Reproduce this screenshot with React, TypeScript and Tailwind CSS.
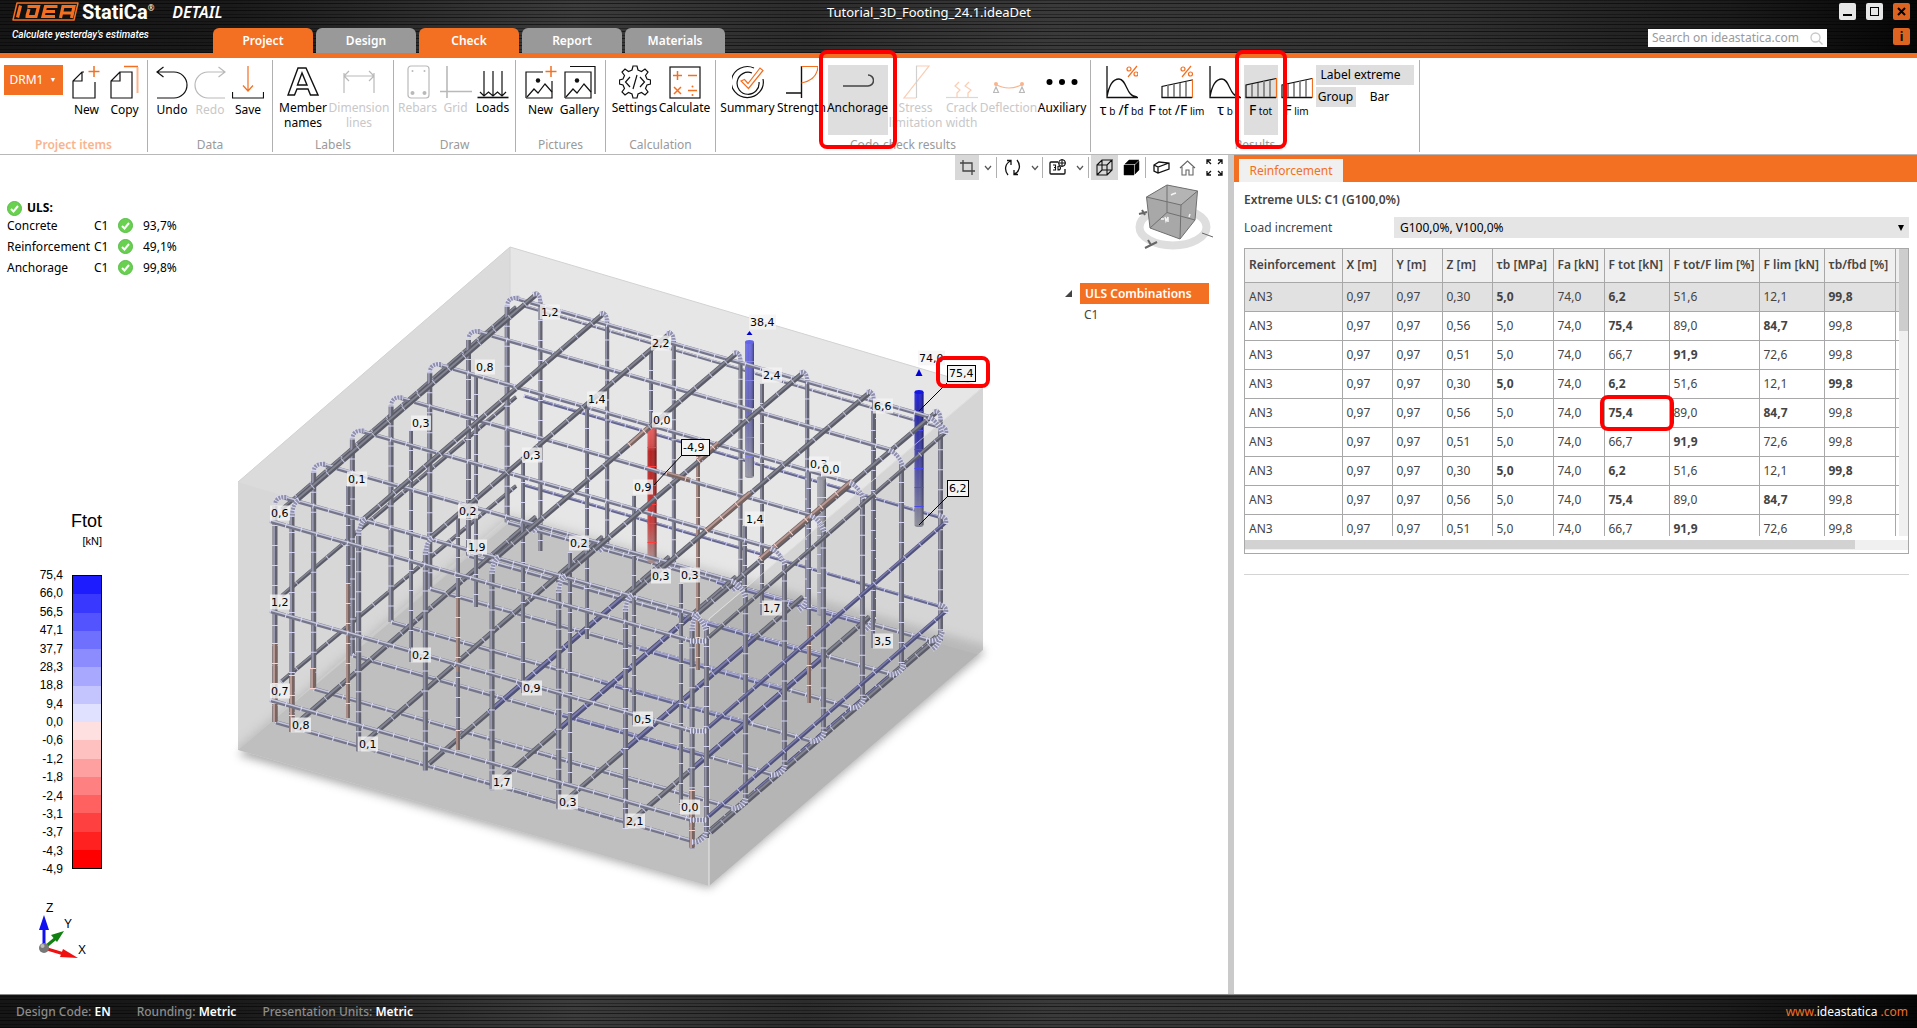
import React from "react";

type Pt = [number, number];

const SANS = "font-['Noto_Sans','Segoe_UI',sans-serif]";
const BRUSHED =
  "bg-[repeating-linear-gradient(0deg,rgba(0,0,0,0.55)_0px,rgba(0,0,0,0.55)_1px,transparent_1px,transparent_3px,rgba(0,0,0,0.35)_3px,rgba(0,0,0,0.35)_4px,transparent_4px,transparent_7px),linear-gradient(90deg,#161616_0%,#1a1a1a_12%,#3c3c3c_30%,#2c2c2c_42%,#3a3a3a_55%,#303030_75%,#1c1c1c_90%,#060606_100%)]";

/* ---------- ribbon icons (32 x 34 drawing area) ---------- */

const O = "#f36f21";
const K = "#111111";
const G = "#b9b9b9";

function Ico({ children, w = 32 }: { children: React.ReactNode; w?: number }) {
  return (
    <svg width={w} height="34" viewBox={`0 0 ${w} 34`} fill="none" stroke={K} strokeWidth="1.2" className="shrink-0" aria-hidden="true">
      {children}
    </svg>
  );
}

const picture = (
  <>
    <path d="M1 33V7H18M27 16V33H1" />
    <circle cx="13" cy="15.500" r="2.200" fill={K} stroke="none" />
    <path d="M2 32L9 24L13 28L20 19L27 27" />
  </>
);

const icons: Record<string, React.ReactNode> = {
  newDoc: (
    <Ico>
      <path d="M13 7H11L2 16V33H24V17M11 7V16H2" />
      <path d="M23 1V12M17.500 6.500H28.500" stroke={O} strokeWidth="1.500" />
    </Ico>
  ),
  copy: (
    <Ico>
      <path d="M11 7L2 16V33H23V7ZM11 7V16H2" />
      <path d="M15 1.500H29" stroke={O} strokeWidth="1.500" />
      <path d="M28.500 2V28" stroke="#f9b48d" strokeWidth="2" />
    </Ico>
  ),
  undo: (
    <Ico>
      <path d="M1 7H18A13 13 0 0 1 18 33H1M7.500 2L1 7L7.500 12" />
    </Ico>
  ),
  redo: (
    <Ico>
      <path d="M31 7H14A13 13 0 0 0 14 33H31M24.500 2L31 7L24.500 12" stroke={G} />
    </Ico>
  ),
  save: (
    <Ico>
      <path d="M0.500 27V33H31.500V27" />
      <path d="M16 1V26M11 20.500L16 26L21 20.500" stroke={O} />
    </Ico>
  ),
  member: (
    <Ico>
      <path d="M11 3H19L31 30H23.500L21 24H10L7.500 30H1ZM15 8L10.500 20H20Z" strokeWidth="1.400" />
    </Ico>
  ),
  dimension: (
    <Ico>
      <path d="M1 8V28M31 8V28M1 11H31M6 6L1 11L6 16M26 6L31 11L26 16" stroke={G} />
    </Ico>
  ),
  rebars: (
    <Ico>
      <rect x="6" y="1" width="21" height="32" rx="3" stroke={G} />
      <g fill={G} stroke="none">
        <circle cx="10.500" cy="6" r="1" /><circle cx="22.500" cy="6" r="1" />
        <circle cx="10.500" cy="28" r="2" /><circle cx="22.500" cy="28" r="2" />
      </g>
    </Ico>
  ),
  grid: (
    <Ico>
      <path d="M7 1V33M0 26.500H32" stroke={G} strokeWidth="1.600" />
    </Ico>
  ),
  loads: (
    <Ico>
      <path d="M0.500 32.500H31.500" strokeWidth="1.600" />
      <path d="M7 6V31M16 6V31M25 6V31M3 27L7 31L11.500 27L16 31L20.500 27L25 31L29 27" />
    </Ico>
  ),
  newPic: (
    <Ico>
      {picture}
      <path d="M26 1V12M20.500 6.500H31.500" stroke={O} strokeWidth="1.500" />
    </Ico>
  ),
  gallery: (
    <Ico>
      {picture}
      <path d="M18 7H27V16M6 1.500H31V29" />
    </Ico>
  ),
  settings: (
    <Ico>
      <path d="M13 5L14 1H18L19 5L22.500 6.500L26 4L29 7L26.500 10.500L28 14L31.500 15V19L28 20L26.500 23.500L29 27L26 30L22.500 27.500L19 29L18 33H14L13 29L9.500 27.500L6 30L3 27L5.500 23.500L4 20L0.500 19V15L4 14L5.500 10.500L3 7L6 4L9.500 6.500Z" />
      <path d="M11 12L6.500 17L11 22M21 12L25.500 17L21 22M18 10L14 24" />
    </Ico>
  ),
  calculate: (
    <Ico>
      <rect x="1" y="2" width="30" height="31" />
      <path d="M8.500 6V15M4 10.500H13M19 10.500H28M5 22L12 29M12 22L5 29M19 25.500H28" stroke={O} strokeWidth="1.500" />
      <circle cx="23.500" cy="21.500" r="1" fill={O} stroke="none" />
      <circle cx="23.500" cy="30" r="1" fill={O} stroke="none" />
    </Ico>
  ),
  summary: (
    <Ico>
      <path d="M22 3A16 15.500 0 1 0 31 14M20 8A11 11 0 1 0 27 17" />
      <path d="M9 16L12.500 14.500L16 18.500L28 3L31 5.500L16.500 23.500Z" stroke={O} />
    </Ico>
  ),
  strength: (
    <Ico>
      <path d="M0 28H15.500V33M15.500 28V1" strokeWidth="1.400" />
      <path d="M15.500 1.500H32Q31 15 15.500 18" stroke={O} />
    </Ico>
  ),
  anchorage: (
    <Ico>
      <path d="M1 21H26A5 5 0 0 0 26 10" stroke="#444" strokeWidth="1.500" />
    </Ico>
  ),
  stress: (
    <Ico>
      <path d="M16 1H29L4 33H16" stroke="#fbcdb3" />
      <path d="M16.500 1V33" stroke="#d0d0d0" />
    </Ico>
  ),
  crack: (
    <Ico>
      <path d="M0 32.500H32" stroke="#d8d8d8" />
      <path d="M11 32V28L14 25L9 21L13 17M22 32V28L25 25L19 21L23 17" stroke="#fbcdb3" />
    </Ico>
  ),
  deflection: (
    <Ico>
      <path d="M2 19Q16 27 30 19" stroke="#f9b48d" />
      <circle cx="3" cy="19" r="2" fill="#f9b48d" stroke="none" />
      <circle cx="29" cy="19" r="2" fill="#f9b48d" stroke="none" />
      <path d="M3 22L0.500 27.500H5.500ZM29 22L26.500 27.500H31.500Z" stroke={G} />
    </Ico>
  ),
  auxiliary: (
    <Ico>
      <g fill="#000" stroke="none">
        <circle cx="3.500" cy="17" r="3" /><circle cx="16" cy="17" r="3" /><circle cx="28.500" cy="17" r="3" />
      </g>
    </Ico>
  ),
  curvePct: (
    <Ico>
      <path d="M1 1V32.500H32M1 32C3 20 7 14 13 14C21 14 20 32 31 32" strokeWidth="1.300" />
      <g stroke={O}>
        <circle cx="23" cy="4" r="2" /><circle cx="30" cy="9" r="2" /><path d="M31 1L22 12" />
      </g>
    </Ico>
  ),
  curve: (
    <Ico>
      <path d="M1 1V32.500H32M1 32C3 20 7 14 13 14C21 14 20 32 31 32" strokeWidth="1.300" />
    </Ico>
  ),
  barsPct: (
    <Ico>
      <path d="M1 32.500V21.500L31 15" />
      <path d="M0.500 32.500H31" strokeWidth="1.500" />
      <path d="M7 20V32M13 19V32M19 18V32M25 17V32" stroke="#777" strokeWidth="1.600" />
      <path d="M31.500 14V33" stroke={O} />
      <g stroke={O}>
        <circle cx="22" cy="4" r="2" /><circle cx="29.500" cy="9" r="2" /><path d="M30 1L21 12" />
      </g>
    </Ico>
  ),
  bars: (
    <Ico>
      <path d="M1 32.500V20L31 13.500" />
      <path d="M0.500 32.500H31" strokeWidth="1.500" />
      <path d="M7 19V32M13 18V32M19 16V32M25 15V32" stroke="#777" strokeWidth="1.600" />
      <path d="M31.500 13V33" stroke={O} />
    </Ico>
  ),
};

function Tool({
  icon, label, w, disabled, active, marked, low,
}: {
  icon: string; label: React.ReactNode; w: string; disabled?: boolean; active?: boolean; marked?: boolean; low?: boolean;
}) {
  return (
    <button
      type="button"
      disabled={disabled}
      className={`relative flex h-[70px] shrink-0 flex-col items-center text-xs leading-[15px] ${w} ${active ? "bg-[#dedede]" : ""} ${disabled ? "text-[#c8c8c8]" : "text-black"}`}
    >
      {icons[icon]}
      <span className={`text-center whitespace-nowrap ${low ? "mt-[3px]" : "mt-px"}`}>{label}</span>
      {marked && <span className="pointer-events-none absolute -inset-x-[9px] -top-[15px] -bottom-[14px] z-10 rounded-lg border-[4px] border-[#ff0000]" />}
    </button>
  );
}

function Group({ title, w, hot, children }: { title: string; w: string; hot?: boolean; children: React.ReactNode }) {
  return (
    <section className={`flex shrink-0 flex-col border-r border-[#b0b0b0] pt-[5px] ${w}`}>
      <div className="flex h-[70px] justify-center">{children}</div>
      <h2 className={`mt-[2px] text-center text-xs leading-4 ${hot ? "font-semibold text-[#f9b48d]" : "text-[#9a9a9a]"}`}>{title}</h2>
    </section>
  );
}

const Main = ({ children }: { children: React.ReactNode }) => <span className="text-sm leading-[15px]">{children}</span>;
const Sub = ({ children }: { children: React.ReactNode }) => <small className="text-[10px]"> {children}</small>;

function Ribbon() {
  return (
    <div className="flex h-[97px] border-b border-[#b8b8b8] bg-white pt-[2px] pb-[2px]">
      <Group title="Project items" w="w-[148px]" hot>
        <button type="button" className="mr-[5px] flex h-[30px] w-[59px] items-center justify-between bg-[#f36f21] px-[6px] text-xs text-white">
          DRM1 <span className="text-[7px]">▼</span>
        </button>
        <Tool icon="newDoc" label="New" w="w-[38px]" low />
        <Tool icon="copy" label="Copy" w="w-[38px]" low />
      </Group>
      <Group title="Data" w="w-[125px]">
        <Tool icon="undo" label="Undo" w="w-[38px]" low />
        <Tool icon="redo" label="Redo" w="w-[38px]" low disabled />
        <Tool icon="save" label="Save" w="w-[38px]" low />
      </Group>
      <Group title="Labels" w="w-[121px]">
        <Tool icon="member" label={<>Member<br />names</>} w="w-[52px]" />
        <Tool icon="dimension" label={<>Dimension<br />lines</>} w="w-[60px]" disabled />
      </Group>
      <Group title="Draw" w="w-[122px]">
        <Tool icon="rebars" label="Rebars" w="w-[40px]" disabled />
        <Tool icon="grid" label="Grid" w="w-[36px]" disabled />
        <Tool icon="loads" label="Loads" w="w-[38px]" />
      </Group>
      <Group title="Pictures" w="w-[90px]">
        <Tool icon="newPic" label="New" w="w-[38px]" low />
        <Tool icon="gallery" label="Gallery" w="w-[40px]" low />
      </Group>
      <Group title="Calculation" w="w-[110px]">
        <Tool icon="settings" label="Settings" w="w-[48px]" />
        <Tool icon="calculate" label="Calculate" w="w-[52px]" />
      </Group>
      <Group title="Code-check results" w="w-[375px]">
        <Tool icon="summary" label="Summary" w="w-[56px]" />
        <Tool icon="strength" label="Strength" w="w-[52px]" />
        <Tool icon="anchorage" label="Anchorage" w="w-[60px]" active marked />
        <Tool icon="stress" label={<>Stress<br />limitation</>} w="w-[56px]" disabled />
        <Tool icon="crack" label={<>Crack<br />width</>} w="w-[36px]" disabled />
        <Tool icon="deflection" label="Deflection" w="w-[58px]" disabled />
        <Tool icon="auxiliary" label="Auxiliary" w="w-[49px]" />
      </Group>
      <Group title="Results" w="w-[329px]">
        <Tool icon="curvePct" label={<><Main>τ</Main><Sub>b</Sub> <Main>/f</Main><Sub>bd</Sub></>} w="w-[50px]" low />
        <Tool icon="barsPct" label={<><Main>F</Main><Sub>tot</Sub> <Main>/F</Main><Sub>lim</Sub></>} w="w-[60px]" low />
        <Tool icon="curve" label={<><Main>τ</Main><Sub>b</Sub></>} w="w-[37px]" low />
        <Tool icon="bars" label={<><Main>F</Main><Sub>tot</Sub></>} w="w-[34px]" low active marked />
        <Tool icon="bars" label={<><Main>F</Main><Sub>lim</Sub></>} w="w-[38px]" low />
        <div className="flex flex-col items-start gap-[2px] text-xs">
          <button type="button" className="h-5 w-[98px] bg-[#dedede] pl-[5px] text-left">Label extreme</button>
          <div className="flex">
            <button type="button" className="h-5 w-10 bg-[#dedede]">Group</button>
            <button type="button" className="h-5 w-12">Bar</button>
          </div>
        </div>
      </Group>
    </div>
  );
}

/* ---------- title bar ---------- */

const tabs = ["Project", "Design", "Check", "Report", "Materials"];

function Header() {
  return (
    <header className={`relative flex h-[58px] items-end border-b-[5px] border-[#f36f21] ${BRUSHED}`}>
      <div className="w-[213px] shrink-0 self-stretch pl-3 text-white">
        <div className="flex h-[23px] items-center">
          <svg width="68" height="19" viewBox="0 0 68 19" className="shrink-0" aria-label="IDEA">
            <path d="M5 1H66L62 18H1Z" fill="#111" stroke="#f36f21" strokeWidth="1.500" strokeLinejoin="round" />
            <g fill="none" stroke="#f36f21" strokeWidth="3.200">
              <path d="M8.500 3.500L5.500 15.500" />
              <path d="M15.500 4.500H26.500L24 14.500H13.500M17 7L15 14" />
              <path d="M45.500 4.500H33.500L31 14.500H43M32.500 9.500H43" />
              <path d="M48.500 16L51 4.500H62L59.500 16M50 11H60" />
            </g>
          </svg>
          <span className="ml-[2px] font-['Roboto',sans-serif] text-xl font-bold">StatiCa</span>
          <sup className="text-[8px]">®</sup>
          <span className="ml-[18px] font-['Noto_Sans',sans-serif] text-base font-semibold italic">DETAIL</span>
        </div>
        <p className="mt-1 font-['Roboto',sans-serif] text-[10px] leading-4 font-medium italic">Calculate yesterday's estimates</p>
      </div>
      <nav className="flex gap-[3px]">
        {tabs.map((t) => (
          <button
            key={t}
            type="button"
            className={`h-[25px] w-[100px] rounded-t-md text-xs font-semibold text-white ${t === "Project" || t === "Check" ? "bg-[#f36f21]" : "bg-[#999999]"}`}
          >
            {t}
          </button>
        ))}
      </nav>
      <h1 className="absolute inset-x-0 top-1 mx-auto w-fit pr-[59px] text-[13px] leading-4 text-white">Tutorial_3D_Footing_24.1.ideaDet</h1>
      <div className="ml-auto flex gap-[66px] self-stretch pr-[7px]">
        <label className="mt-[29px] flex h-[18px] w-[179px] items-center bg-white px-1">
          <input aria-label="Search" placeholder="Search on ideastatica.com" className="w-0 flex-1 text-xs text-black outline-none placeholder:text-[#9a9a9a]" />
          <svg width="13" height="13" viewBox="0 0 13 13" fill="none" stroke="#c8c8c8" strokeWidth="1.300" aria-hidden="true">
            <circle cx="5.500" cy="5.500" r="4.500" /><path d="M9 9L12.500 12.500" />
          </svg>
        </label>
        <div className="-ml-[54px] flex w-[71px] flex-wrap content-start justify-end gap-x-[10px] gap-y-2 pt-[3px]">
          <button type="button" aria-label="Minimize" className="flex h-[17px] w-[17px] items-end justify-center rounded-xs bg-[#e6e6e6] pb-1"><span className="h-[2px] w-[9px] bg-black" /></button>
          <button type="button" aria-label="Maximize" className="flex h-[17px] w-[17px] items-center justify-center rounded-xs bg-[#e6e6e6]"><span className="h-[9px] w-[9px] border border-black" /></button>
          <button type="button" aria-label="Close" className="flex h-[17px] w-[17px] items-center justify-center rounded-xs bg-[#dd6420]">
            <svg width="9" height="9" viewBox="0 0 9 9" stroke="#000" strokeWidth="2"><path d="M1 1L8 8M8 1L1 8" /></svg>
          </button>
          <button type="button" aria-label="Information" className="flex h-[17px] w-[17px] items-center justify-center rounded-xs bg-[#dd6420] text-xs font-bold text-black">i</button>
        </div>
      </div>
    </header>
  );
}

/* ---------- 3D model ---------- */

type BarStyle = "z" | "u" | "v" | "deep" | "back" | "red";

const barPaint: Record<BarStyle, [string, string, string]> = {
  z: ["#62626e", "#9696ac", "#d4d4f2"],
  u: ["#75758a", "#c6c6dc", "#dcdcfa"],
  v: ["#5a5b66", "#838492", "#c0c0da"],
  deep: ["#50517a", "#7c7cac", "#c0c0ea"],
  back: ["#66678c", "#a6a6d2", "#cfcffa"],
  red: ["#7a6460", "#b89a96", "#f6d4d0"],
};

function Bar({ a, b, kind, w = 4, step = 19 }: { a: Pt; b: Pt; kind: BarStyle; w?: number; step?: number }) {
  const [base, light, tick] = barPaint[kind];
  const vertical = a[0] === b[0];
  const dx = vertical ? -1 : 0;
  const dy = vertical ? 0 : -1;
  return (
    <g>
      <line x1={a[0]} y1={a[1]} x2={b[0]} y2={b[1]} stroke={base} strokeWidth={w} />
      <line x1={a[0] + dx} y1={a[1] + dy} x2={b[0] + dx} y2={b[1] + dy} stroke={light} strokeWidth={w / 2 - 0.5} />
      <line x1={a[0]} y1={a[1]} x2={b[0]} y2={b[1]} stroke={tick} strokeWidth={w + 1} strokeDasharray={`1 ${step}`} />
    </g>
  );
}

const Bend = ({ d }: { d: string }) => (
  <g fill="none">
    <path d={d} stroke="#8f8fa8" strokeWidth="4" />
    <path d={d} stroke="#dcdcfa" strokeWidth="5.500" strokeDasharray="1 2" />
  </g>
);

const seven = [0, 1, 2, 3, 4, 5, 6];

const thinBars: [number, number, number, boolean][] = [
  [476, 374, 607, false], [411, 430, 662, false], [348, 485, 718, false], [587, 408, 639, false],
  [523, 462, 693, false], [458, 517, 750, false], [570, 552, 783, false], [634, 495, 725, false],
  [651, 350, 430, false], [762, 383, 615, false], [681, 583, 805, false], [809, 468, 703, false],
  [873, 410, 648, false], [745, 525, 600, false], [698, 437, 670, true],
];

const tags: [string, number, number, boolean?][] = [
  ["1,2", 541, 312], ["0,8", 476, 367], ["0,3", 412, 423], ["1,4", 588, 399], ["0,3", 523, 455], ["0,1", 348, 479],
  ["0,6", 271, 513], ["0,2", 459, 511], ["0,2", 570, 543], ["1,9", 468, 547], ["1,2", 271, 602], ["2,2", 652, 343],
  ["38,4", 750, 322], ["2,4", 763, 375], ["6,6", 874, 406], ["0,0", 653, 420], ["-4,9", 683, 447, true], ["0,9", 634, 487],
  ["0,3", 810, 464], ["0,0", 822, 469], ["1,4", 746, 519], ["74,0", 919, 358], ["75,4", 949, 373, true], ["6,2", 949, 488, true],
  ["0,3", 652, 576], ["0,3", 681, 575], ["1,7", 763, 608], ["0,2", 412, 655], ["0,7", 271, 691], ["0,8", 292, 725],
  ["0,1", 359, 744], ["0,9", 523, 688], ["1,7", 493, 782], ["0,3", 559, 802], ["2,1", 626, 821], ["0,5", 634, 719],
  ["0,0", 681, 807], ["3,5", 874, 641],
];

function Anchor({ x, y1, y2, fill, tick }: { x: number; y1: number; y2: number; fill: string; tick: string }) {
  return (
    <g>
      <path d={`M${x - 4.5} ${y1}V${y2}A4.5 2 0 0 0 ${x + 4.5} ${y2}V${y1}Z`} fill={`url(#${fill})`} />
      <rect x={x - 4.5} y={y1} width="9" height={y2 - y1} fill="url(#round)" />
      <ellipse cx={x} cy={y1} rx="4.500" ry="2" fill={`url(#${fill})`} />
      <line x1={x} y1={y1 + 19} x2={x} y2={y2 - 10} stroke={tick} strokeWidth="9" strokeDasharray="1 18" />
    </g>
  );
}

function Model() {
  return (
    <svg width="1228" height="839" viewBox="0 155 1228 839" className="absolute top-0 left-0" role="img" aria-label="Footing reinforcement model">
      <defs>
        <filter id="soft" x="-10%" y="-10%" width="120%" height="120%"><feGaussianBlur stdDeviation="5" /></filter>
        <clipPath id="box"><path d="M238 482L510 247L983 387V650L709 886L238 750Z" /></clipPath>
        <linearGradient id="round">
          <stop offset="0" stopColor="#fff" stopOpacity="0.150" /><stop offset="0.400" stopColor="#fff" stopOpacity="0.050" /><stop offset="1" stopColor="#000" stopOpacity="0.400" />
        </linearGradient>
        <linearGradient id="blueA" gradientUnits="userSpaceOnUse" x1="0" y1="341" x2="0" y2="477"><stop offset="0" stopColor="#6464ea" /><stop offset="0.500" stopColor="#5e5eac" /><stop offset="1" stopColor="#9292a0" /></linearGradient>
        <linearGradient id="blueB" gradientUnits="userSpaceOnUse" x1="0" y1="391" x2="0" y2="526"><stop offset="0" stopColor="#1616e8" /><stop offset="0.150" stopColor="#1c1ca0" /><stop offset="0.500" stopColor="#3a3aa0" /><stop offset="0.750" stopColor="#5c5c98" /><stop offset="1" stopColor="#888892" /></linearGradient>
        <linearGradient id="redA" gradientUnits="userSpaceOnUse" x1="0" y1="427" x2="0" y2="562"><stop offset="0" stopColor="#e85858" /><stop offset="0.140" stopColor="#d04040" /><stop offset="0.180" stopColor="#b01414" /><stop offset="0.700" stopColor="#c43030" /><stop offset="1" stopColor="#a48c8c" /></linearGradient>
        <linearGradient id="greyA"><stop offset="0" stopColor="#a0a0ac" /><stop offset="1" stopColor="#8c8c98" /></linearGradient>
      </defs>

      {/* concrete block */}
      <path d="M238 755L709 888L985 652L900 600L300 700Z" fill="#8a8a8a" opacity="0.700" filter="url(#soft)" />
      <path d="M238 482L510 247L983 387V650L709 886L238 750Z" fill="#e6e6e6" />
      <path d="M238 482L510 247V515L238 750Z" fill="#dbdbdb" />
      <g clipPath="url(#box)">
        <path d="M232 752L510 514L995 648L709 892Z" fill="#aaaaaa" filter="url(#soft)" opacity="0.500" />
        <path d="M238 750L510 522L983 656L709 886Z" fill="#c3c3c3" />
      </g>
      <path d="M709 619L983 387V650L709 886Z" fill="#000" opacity="0.070" />
      <path d="M238 482L709 619V886L238 750Z" fill="#000" opacity="0.015" />
      <path d="M238 482L510 247L983 387M510 247V300M709 886V619L983 387" fill="none" stroke="#d2d2d2" />
      <path d="M709 619V886" stroke="#dedede" />

      {/* back rings and verticals */}
      {[0, 90, 179].map((d) => (
        <g key={d}>
          <Bar a={[281, 510 + d * 0.96]} b={[516, 307 + d]} kind="v" />
          <Bar a={[524, 306 + d]} b={[942, 428 + d]} kind={d ? "back" : "u"} w={3} step={14} />
        </g>
      ))}
      {seven.map((j) => <Bar key={j} a={[540.5 + 66.7 * j, 300 + 19.6 * j]} b={[540.5 + 66.7 * j, (j ? 530 : 551) + 18.5 * j]} kind="z" />)}
      {seven.map((i) => <Bar key={i} a={[275 + 38.7 * i, 505 - 33.2 * i]} b={[275 + 38.7 * i, 722 - 33.3 * i]} kind="z" w={5} />)}

      {/* bottom mesh */}
      {seven.map((i) => <Bar key={i} a={[275 + 38.7 * i, 722 - 33.3 * i]} b={[692 + 39.5 * i, 841 - 33.5 * i]} kind="u" step={14} />)}
      {seven.map((i) => (
        <Bar key={i} a={[275 + 38.7 * i + 209, 722 - 33.3 * i + 59.5]} b={[275 + 38.7 * i + 355, 722 - 33.3 * i + 101]} kind={i > 1 ? "back" : "u"} step={14} />
      ))}
      {seven.map((j) => <Bar key={j} a={[295 + 66.7 * j, 725 + 19.7 * j]} b={[536 + 66.7 * j, 517 + 20 * j]} kind="v" w={5} />)}
      {[2, 3, 4, 5, 6].map((j) => (
        <Bar key={j} a={[355 + 66.7 * j, 673 + 19.8 * j]} b={[488 + 66.7 * j, 558.5 + 19.9 * j]} kind="deep" w={5} />
      ))}
      {seven.map((j) => <Bend key={j} d={`M${540 + 66.7 * j} ${519 + 19.6 * j}q-1 8 -8 13`} />)}

      {thinBars.map(([x, y1, y2, red]) => <Bar key={x} a={[x, y1]} b={[x, y2]} kind={red ? "red" : "z"} w={4} />)}
      <Bar a={[348, 583]} b={[348, 718]} kind="red" />
      <Bar a={[458, 597]} b={[458, 672]} kind="red" />
      <Bar a={[458, 730]} b={[458, 750]} kind="red" />
      <Bar a={[809, 625]} b={[809, 703]} kind="red" />

      {/* anchors */}
      <Anchor x={821.5} y1={478} y2={614} fill="greyA" tick="#d4d4f2" />
      <Anchor x={749.5} y1={342} y2={476} fill="blueA" tick="#8484e8" />
      <Anchor x={652} y1={428} y2={561} fill="redA" tick="#ff3c3c" />
      <Anchor x={919} y1={392} y2={525} fill="blueB" tick="#4a4af0" />

      {/* front and right verticals */}
      {seven.map((j) => <Bar key={j} a={[292 + 66.7 * j, 512 + 19.2 * j]} b={[292 + 66.7 * j, 732 + 19.4 * j]} kind="z" w={5} />)}
      {seven.map((i) => <Bar key={i} a={[706.5 + 39 * i, 626 - 32.8 * i]} b={[706.5 + 39 * i, 838 - 33.5 * i]} kind="z" w={5} />)}
      <Bar a={[275, 643]} b={[275, 722]} kind="red" w={5} />
      <Bar a={[292, 675]} b={[292, 732]} kind="red" w={5} />
      <Bar a={[313, 668]} b={[313, 689]} kind="red" w={5} />
      <Bar a={[692, 790]} b={[692, 848]} kind="red" w={5} />

      {/* top mesh */}
      {seven.map((i) => <Bar key={i} a={[282 + 38.7 * i, 497 - 33.2 * i]} b={[694 + 39.4 * i, 614 - 32.8 * i]} kind="u" step={15} />)}
      {seven.map((j) => <Bar key={j} a={[297 + 66.7 * j, 500 + 19 * j]} b={[538 + 66.7 * j, 293 + 19.6 * j]} kind="v" w={5} />)}
      <Bar a={[760, 559]} b={[852, 481]} kind="red" w={5} />
      <Bar a={[706, 531]} b={[750, 493]} kind="red" w={5} />
      <Bar a={[698, 461]} b={[718, 443]} kind="red" w={5} />
      <Bar a={[629, 445]} b={[648, 428]} kind="red" w={5} />
      <Bar a={[666, 473]} b={[690, 480]} kind="red" />

      {/* outer rings */}
      {[0, 90, 179].map((d) => (
        <g key={d}>
          <Bar a={[270, 521 + d]} b={[692, 641 + d]} kind="u" step={15} />
          <Bar a={[708, 638 + d]} b={[946, 432 + d]} kind={d ? "deep" : "v"} />
          <Bend d={`M690 ${641 + d}h17`} />
          <Bend d={`M946 ${434 + d}q2 -7 -8 -9`} />
        </g>
      ))}

      {/* hooks */}
      {seven.map((i) => <Bend key={i} d={`M${275 + 38.7 * i} ${504 - 33.2 * i}q1 -8 12 -7`} />)}
      {seven.map((i) => <Bend key={i} d={`M${692 + 39.4 * i} ${614 - 32.8 * i}q9 3 14 16`} />)}
      {seven.map((j) => <Bend key={j} d={`M${533 + 66.7 * j} ${294 + 19.6 * j}q8 -2 7 9`} />)}
      {seven.map((j) => <Bend key={j} d={`M${299 + 66.7 * j} ${500 + 19 * j}q-7 4 -7 17`} />)}
      <Bar a={[710, 833]} b={[940, 636]} kind="v" w={5} step={15} />
      {seven.map((i) => <Bend key={i} d={`M${692 + 39.5 * i} ${842 - 33.5 * i}q12 0 14 -10`} />)}
      <path d="M709 619L983 387" stroke="#e8e8e8" opacity="0.600" />

      {/* load arrows and leaders */}
      <path d="M749.500 331L746.500 335H752.500Z" fill="#0000d8" />
      <path d="M919 369L915.500 376H922.500Z" fill="#0000d8" />
      <path d="M919 411L947 383M919 525L947 497M654 485L682 455" stroke="#000" />

      {tags.map(([t, x, y, boxed], i) => (
        <g key={i}>
          <rect
            x={boxed ? x - 2 + 0.5 : x - 1}
            y={y - 8 + 0.5}
            width={t.length * 7 - 1 + (boxed ? 1 : 0)}
            height={boxed ? 16 : 15}
            fill="#f4f4f4"
            fillOpacity={boxed ? 1 : 0.8}
            stroke={boxed ? "#000" : "none"}
          />
          <text x={x} y={y + 4} fontSize="11" fontFamily="DejaVu Sans" fill="#000">{t}</text>
        </g>
      ))}
      <rect x="938" y="358" width="50" height="28" rx="6" fill="none" stroke="#ff0000" strokeWidth="4" />
    </svg>
  );
}

/* ---------- viewport overlays ---------- */

const Ok = () => (
  <svg width="15" height="15" viewBox="0 0 15 15" aria-label="passed">
    <circle cx="7.500" cy="7.500" r="7" fill="#6ad150" stroke="#57bd48" />
    <path d="M4 8L6.500 10.500L11 5" fill="none" stroke="#fff" strokeWidth="2" />
  </svg>
);

const scale: [string, string][] = [
  ["75,4", "bg-[#1c1cff]"], ["66,0", "bg-[#3838ff]"], ["56,5", "bg-[#5454ff]"], ["47,1", "bg-[#7070ff]"],
  ["37,7", "bg-[#8c8cff]"], ["28,3", "bg-[#a8a8ff]"], ["18,8", "bg-[#c4c4ff]"], ["9,4", "bg-[#e0e0ff]"],
  ["0,0", "bg-[#ffe0e0]"], ["-0,6", "bg-[#ffc0c0]"], ["-1,2", "bg-[#ffa0a0]"], ["-1,8", "bg-[#ff8080]"],
  ["-2,4", "bg-[#ff6060]"], ["-3,1", "bg-[#ff4040]"], ["-3,7", "bg-[#ff2020]"], ["-4,3", "bg-[#ff0000]"],
];

const checks = [["Concrete", "93,7%"], ["Reinforcement", "49,1%"], ["Anchorage", "99,8%"]];

function LeftOverlay() {
  return (
    <div className="relative w-[200px] pt-[46px]">
      <div className="flex h-[14px] items-center gap-[5px] pl-[7px] text-xs font-bold"><Ok />ULS:</div>
      <table className="ml-[7px] text-left text-xs">
        <tbody>
          {checks.map(([n, v]) => (
            <tr key={n} className="h-[21px]">
              <td className="w-[87px]">{n}</td>
              <td className="w-6">C1</td>
              <td className="w-[25px]"><Ok /></td>
              <td>{v}</td>
            </tr>
          ))}
        </tbody>
      </table>
      <div className="mt-[230px] w-[102px] text-right font-['Liberation_Sans',sans-serif] text-[11px]">
        <div className="text-lg leading-[26px]">Ftot</div>
        <div className="leading-[14px]">[kN]</div>
        <div className="mt-[18px] flex justify-end gap-[9px]">
          <div className="flex h-[312px] flex-col justify-between text-xs leading-[18px]">
            {scale.map(([t]) => <span key={t}>{t}</span>)}
            <span>-4,9</span>
          </div>
          <div className="my-[9px] flex w-[30px] flex-col border border-black">
            {scale.map(([t, c]) => <div key={t} className={`flex-1 ${c}`} />)}
          </div>
        </div>
      </div>
      <svg width="64" height="68" viewBox="28 898 64 68" className="mt-[21px] ml-7" aria-label="Axes">
        <g strokeWidth="3">
          <path d="M44 947V928" stroke="#1010f0" /><path d="M44 947L56 937" stroke="#108010" /><path d="M44 947L64 953" stroke="#f01010" />
        </g>
        <path d="M44 914L39 929H49Z" fill="#1010f0" /><path d="M64 930L51 934L57 941Z" fill="#108010" /><path d="M78 957L63 948L60 956Z" fill="#f01010" />
        <circle cx="44" cy="947" r="5" fill="#777" /><circle cx="42.500" cy="945" r="2" fill="#bbb" />
        <g fontFamily="Liberation Sans" fontSize="12"><text x="46" y="911">Z</text><text x="64" y="927">Y</text><text x="78" y="953">X</text></g>
      </svg>
    </div>
  );
}

const Chev = ({ w }: { w: string }) => (
  <button type="button" aria-label="More" className={`flex items-center justify-center ${w}`}>
    <svg width="8" height="6" viewBox="0 0 8 6" fill="none" stroke="#555" strokeWidth="1.200"><path d="M1 1L4 4.500L7 1" /></svg>
  </button>
);
const Sep = () => <span className="my-[2px] w-px bg-[#b0b0b0]" />;

function ViewBtn({ label, w, on, children }: { label: string; w: string; on?: boolean; children: React.ReactNode }) {
  return (
    <button type="button" aria-label={label} className={`flex items-center justify-center ${w} ${on ? "bg-[#d8d8d8]" : ""}`}>
      <svg width="17" height="17" viewBox="0 0 17 17" fill="none" stroke="#111" strokeWidth="1.300">{children}</svg>
    </button>
  );
}

function RightOverlay() {
  return (
    <div className="relative flex flex-col items-end">
      <div className="flex h-[25px] items-stretch">
        <ViewBtn label="Crop" w="w-6" on><path d="M4 1V12H16M1 4H13V16" stroke="#444" /></ViewBtn>
        <Chev w="w-[17px]" /><Sep />
        <ViewBtn label="Rotate" w="w-[30px]">
          <path d="M4 16C0 11 1 4 7 2M7 6V1.500H3M13 1C17 6 16 13 10 15M10 11V15.500H14" />
        </ViewBtn>
        <Chev w="w-[15px]" /><Sep />
        <ViewBtn label="3D view" w="w-[29px]">
          <path d="M9 3H2Q1 3 1 4V14Q1 15 2 15H15Q16 15 16 14V10" />
          <path d="M4 6H6.500V8.500H5M6.500 8.500V11H4M9 7V11Q11.500 11 11.500 9Q11.500 7 9 7" strokeWidth="1.100" />
          <circle cx="13" cy="4" r="3.200" strokeWidth="1.100" />
          <path d="M13 0V8M9 4H17" strokeWidth="1.100" />
        </ViewBtn>
        <Chev w="w-[16px]" /><Sep />
        <ViewBtn label="Wireframe" w="ml-[2px] w-[27px]" on>
          <path d="M1 6H11V16H1ZM1 6L6 1H16L11 6M16 1V11L11 16M6 1V11H16M6 11L1 16" strokeWidth="1.100" />
        </ViewBtn>
        <ViewBtn label="Solid" w="w-[27px]">
          <path d="M1 6H11V16H1ZM2 5L6 1H16L12 5ZM12 6L16 2V11L12 15Z" fill="#000" strokeWidth="0.500" />
        </ViewBtn>
        <Sep />
        <ViewBtn label="Perspective" w="ml-[2px] w-[26px]">
          <path d="M1 6L6 3L16 4V10L5 14L1 12ZM1 6L5 8L16 4M5 8V14" />
        </ViewBtn>
        <ViewBtn label="Home" w="w-[27px]"><path d="M1 9L8.500 2L16 9M3 8V16H7V11H10V16H14V8" stroke="#666" strokeWidth="1.100" /></ViewBtn>
        <ViewBtn label="Full screen" w="w-[27px]"><path d="M5 1H1V5M1 1L5 5M12 1H16V5M16 1L12 5M1 12V16H5M1 16L5 12M16 12V16H12M16 16L12 12" /></ViewBtn>
      </div>
      <svg width="85" height="72" viewBox="1130 181 85 72" className="mt-px mr-[13px]" aria-label="View cube">
        <ellipse cx="1173" cy="227" rx="33.500" ry="18.500" fill="none" stroke="#dedede" strokeWidth="8" />
        <path d="M1167 185L1197.500 191L1195 220L1180 239L1150 228L1146.500 197Z" fill="#a8a8a8" />
        <path d="M1167 185L1197.500 191L1181 205L1146.500 197Z" fill="#b4b4b4" />
        <path d="M1167 185L1197.500 191L1195 220L1180 239L1150 228L1146.500 197ZM1146.500 197L1181 205L1197.500 191M1181 205L1180 239M1167 185V212.500L1195 220M1167 212.500L1150 228" fill="none" stroke="#707070" />
        <path d="M1171 195l2 -1l3 -1M1161 219h3M1165 217l1 4l2 -4v5M1189 217l1 -3" stroke="#f4f4f4" strokeWidth="1.500" fill="none" />
        <path d="M1139 214l8 -2M1142 210l3 5M1145 248l12 -6M1148 240l3 5" stroke="#666" strokeWidth="2" fill="none" />
        <path d="M1202 233l11 4" stroke="#666" fill="none" />
      </svg>
      <div className="mt-[30px] mr-[19px] grid w-[144px] grid-cols-[15px_1fr] items-center text-xs">
        <svg width="7" height="7" viewBox="0 0 7 7" aria-hidden="true"><path d="M7 0V7H0Z" fill="#444" /></svg>
        <button type="button" className="h-[21px] bg-[#f36f21] pl-[5px] text-left font-semibold text-white">ULS Combinations</button>
        <span />
        <button type="button" className="h-[21px] pl-1 text-left text-[#444]">C1</button>
      </div>
    </div>
  );
}

/* ---------- results panel ---------- */

const columns: [string, string][] = [
  ["Reinforcement", "w-[97px]"], ["X [m]", "w-[50px]"], ["Y [m]", "w-[50px]"], ["Z [m]", "w-[50px]"], ["τb [MPa]", "w-[61px]"],
  ["Fa [kN]", "w-[51px]"], ["F tot [kN]", "w-[65px]"], ["F tot/F lim [%]", "w-[90px]"], ["F lim [kN]", "w-[65px]"], ["τb/fbd [%]", "w-[71px]"], ["", ""],
];

const cycle: [string[], number[]][] = [
  [["AN3", "0,97", "0,97", "0,30", "5,0", "74,0", "6,2", "51,6", "12,1", "99,8", ""], [4, 6, 9]],
  [["AN3", "0,97", "0,97", "0,56", "5,0", "74,0", "75,4", "89,0", "84,7", "99,8", ""], [6, 8]],
  [["AN3", "0,97", "0,97", "0,51", "5,0", "74,0", "66,7", "91,9", "72,6", "99,8", ""], [7]],
];

function Panel() {
  return (
    <aside className="flex w-[689px] shrink-0 flex-col border-l-[6px] border-[#cacaca] bg-white text-xs text-[#444]">
      <div className="flex h-[27px] items-end bg-[#f36f21] pl-[5px]">
        <button type="button" className="h-[23px] w-[104px] bg-[#f0f0f0] text-[#f36f21]">Reinforcement</button>
      </div>
      <div className="pr-2 pl-[10px]">
        <h3 className="mt-[10px] leading-4 font-semibold">Extreme ULS: C1 (G100,0%)</h3>
        <div className="mt-[9px] flex items-center">
          <label htmlFor="increment" className="w-[150px]">Load increment</label>
          <div className="relative flex-1">
            <select id="increment" className="h-[21px] w-full appearance-none bg-[#e5e5e5] pl-[6px] text-black">
              <option>G100,0%, V100,0%</option>
            </select>
            <span className="pointer-events-none absolute top-[8px] right-[5px] border-x-[3px] border-t-[6px] border-x-transparent border-t-black" />
          </div>
        </div>
        <div className="mt-[10px] border border-[#a8a8a8]">
          <div className="flex h-[287px]">
            <div className="relative flex-1 overflow-hidden">
              <table className="w-full table-fixed border-collapse text-left">
                <thead>
                  <tr className="h-[33px] bg-[#f0f0f0]">
                    {columns.map(([t, w], i) => (
                      <th key={i} className={`border-r border-b border-[#a8a8a8] pl-1 font-semibold whitespace-nowrap last:border-r-0 ${w}`}>{t}</th>
                    ))}
                  </tr>
                </thead>
                <tbody>
                  {seven.concat([7, 8]).map((r) => {
                    const [cells, bold] = cycle[r % 3];
                    return (
                      <tr key={r} className={`h-[29px] ${r === 0 ? "bg-[#e1e1e1]" : ""}`}>
                        {cells.map((c, i) => (
                          <td key={i} className={`relative border-r border-b border-[#a8a8a8] pl-1 last:border-r-0 ${bold.includes(i) ? "font-bold" : ""}`}>
                            {c}
                            {r === 4 && i === 6 && <span className="pointer-events-none absolute -inset-x-[5px] -inset-y-[4px] z-10 rounded-lg border-[4px] border-[#ff0000]" />}
                          </td>
                        ))}
                      </tr>
                    );
                  })}
                </tbody>
              </table>
            </div>
            <div className="w-[9px] bg-[#f0f0f0]"><div className="h-[82px] bg-[#cdcdcd]" /></div>
          </div>
          <div className="mt-1 mb-[3px] h-[10px] bg-[#f0f0f0]"><div className="h-[9px] w-[92%] bg-[#d2d2d2]" /></div>
        </div>
        <hr className="mt-5 border-[#d4d4d4]" />
      </div>
    </aside>
  );
}

export default function App() {
  return (
    <div className={`flex min-h-screen flex-col overflow-hidden bg-white text-black ${SANS}`}>
      <Header />
      <Ribbon />
      <main className="flex flex-1">
        <div className="relative flex min-w-0 flex-1 items-start justify-between overflow-hidden">
          <Model />
          <LeftOverlay />
          <RightOverlay />
        </div>
        <Panel />
      </main>
      <footer className={`flex h-[34px] items-center gap-[26px] border-t border-[#888] pt-px pr-[9px] pl-4 text-xs font-medium text-[#8c8c8c] ${BRUSHED}`}>
        <span>Design Code: <b className="font-semibold text-white">EN</b></span>
        <span>Rounding: <b className="font-semibold text-white">Metric</b></span>
        <span>Presentation Units: <b className="font-semibold text-white">Metric</b></span>
        <a href="#ideastatica" className="ml-auto font-normal text-[#f36f21]">www.<span className="text-white">ideastatica</span> .com</a>
      </footer>
    </div>
  );
}
